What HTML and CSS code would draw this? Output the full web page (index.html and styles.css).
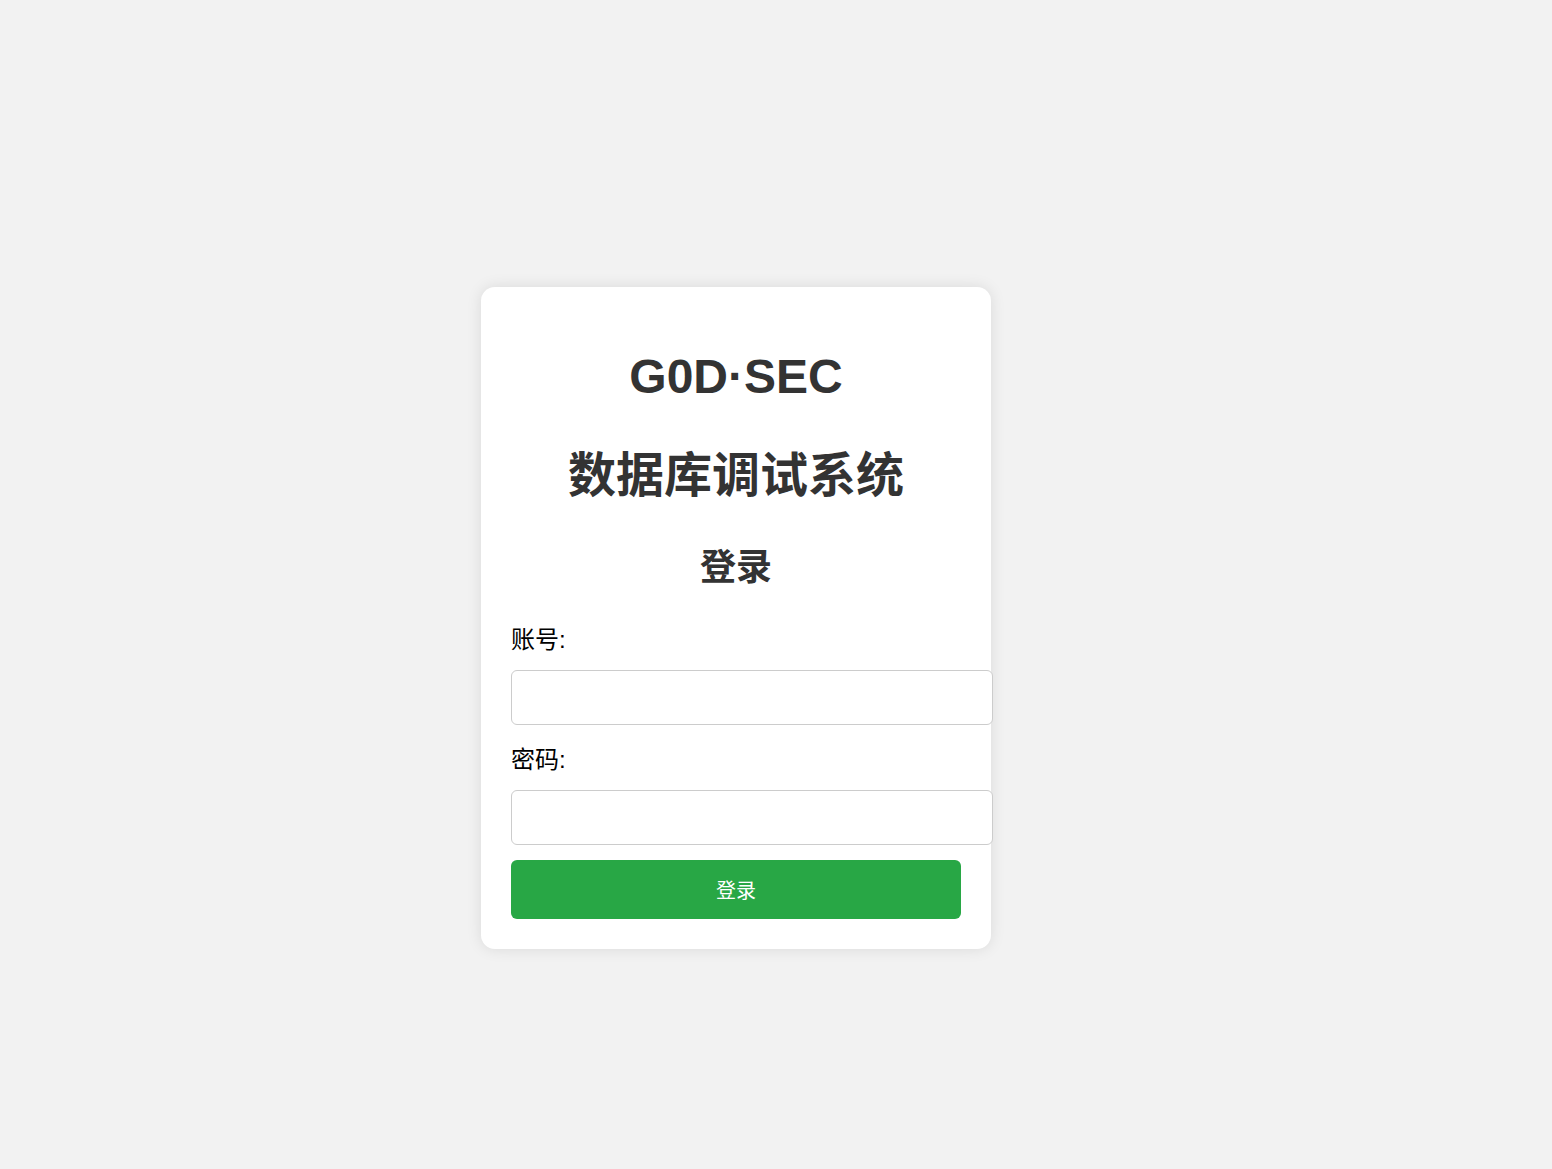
FILE: index.html
```html
<!DOCTYPE html>
<html lang="zh-CN">
<head>
<meta charset="utf-8">
<title>G0D·SEC 数据库调试系统</title>
<link rel="stylesheet" href="styles.css">
</head>
<body>
<div class="page">
  <div class="card">
    <h1 class="brand">G0D·SEC</h1>
    <h1 class="system">数据库调试系统</h1>
    <h2 class="login-title">登录</h2>
    <form class="form">
      <label class="label" for="user">账号:</label>
      <input class="input" id="user" type="text">
      <label class="label" for="pass">密码:</label>
      <input class="input" id="pass" type="password">
      <button class="btn" type="button">登录</button>
    </form>
  </div>
</div>
</body>
</html>
```

FILE: styles.css
```css
html, body {
  margin: 0;
  padding: 0;
}
body {
  background: #f2f2f2;
  font-family: "Liberation Sans", Arial, "Noto Sans CJK SC", sans-serif;
}
.page {
  min-height: 1169px;
  box-sizing: border-box;
  display: flex;
  flex-direction: column;
  align-items: center;
  padding: 287px 80px 0 0;
}
.card {
  width: 450px;
  padding: 30px;
  background: #fff;
  border-radius: 14px;
  box-shadow: 0 0 15px rgba(0, 0, 0, 0.1);
}
.brand, .system {
  font-size: 48px;
  font-weight: bold;
  color: #333;
  text-align: center;
  margin: 32px 0;
}
.system {
  margin-top: 30px;
}
.login-title {
  font-size: 36px;
  font-weight: bold;
  color: #333;
  text-align: center;
  margin: 30px 0;
}
.form {
  display: flex;
  flex-direction: column;
  align-items: flex-start;
}
.label {
  font-size: 24px;
  color: #000;
  line-height: 35px;
  padding-top: 2px;
  margin: 0 0 13px;
}
.input {
  width: 450px;
  box-sizing: content-box;
  padding: 0 15px;
  height: 53px;
  border: 1px solid #ccc;
  border-radius: 6px;
  margin: 0 0 15px;
  font-size: 20px;
  background: #fff;
}
.btn {
  width: 450px;
  height: 59px;
  border: none;
  border-radius: 6px;
  background: #28a745;
  color: #fff;
  font-size: 20px;
  font-family: "Liberation Sans", Arial, "Noto Sans CJK SC", sans-serif;
  cursor: pointer;
}
```
